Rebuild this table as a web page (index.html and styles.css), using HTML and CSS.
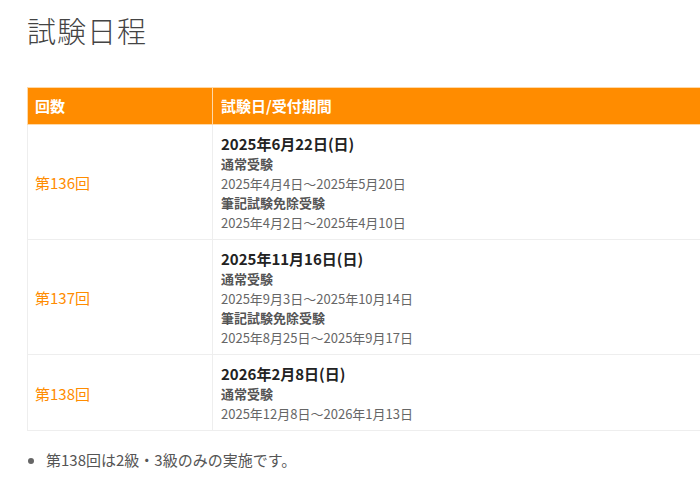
FILE: index.html
```html
<!DOCTYPE html>
<html lang="ja">
<head>
<meta charset="utf-8">
<link rel="stylesheet" href="styles.css">
</head>
<body>
<main class="page">
  <h1 class="title">試験日程</h1>
  <table class="schedule">
    <thead>
      <tr>
        <th class="col-no">回数</th>
        <th class="col-date">試験日/受付期間</th>
      </tr>
    </thead>
    <tbody>
      <tr>
        <td class="round">第136回</td>
        <td class="info">
          <div class="exam-date">2025年6月22日(日)</div>
          <div class="kind">通常受験</div>
          <div class="period">2025年4月4日～2025年5月20日</div>
          <div class="kind">筆記試験免除受験</div>
          <div class="period">2025年4月2日～2025年4月10日</div>
        </td>
      </tr>
      <tr>
        <td class="round">第137回</td>
        <td class="info">
          <div class="exam-date">2025年11月16日(日)</div>
          <div class="kind">通常受験</div>
          <div class="period">2025年9月3日～2025年10月14日</div>
          <div class="kind">筆記試験免除受験</div>
          <div class="period">2025年8月25日～2025年9月17日</div>
        </td>
      </tr>
      <tr>
        <td class="round">第138回</td>
        <td class="info">
          <div class="exam-date">2026年2月8日(日)</div>
          <div class="kind">通常受験</div>
          <div class="period">2025年12月8日～2026年1月13日</div>
        </td>
      </tr>
    </tbody>
  </table>
  <ul class="notes">
    <li>第138回は2級・3級のみの実施です。</li>
  </ul>
</main>
</body>
</html>
```

FILE: styles.css
```css
html, body {
  margin: 0;
  padding: 0;
  background: #fff;
}
body {
  font-family: "Noto Sans CJK JP", "Noto Sans", sans-serif;
  color: #555;
}
.page {
  padding: 10px 0 0 27px;
}
.title {
  margin: 0 0 36px 0;
  font-size: 29px;
  font-weight: 300;
  line-height: 41px;
  letter-spacing: 1px;
  color: #444;
}
.schedule {
  width: 100%;
  border-collapse: collapse;
  font-size: 13px;
}
.schedule th {
  background: #ff8c00;
  color: #fff;
  font-weight: 700;
  font-size: 15px;
  line-height: 21px;
  text-align: left;
  padding: 7px 8px 8px;
  border: 1px solid #ffd9a8;
}
.col-no {
  width: 169px;
}
.schedule td {
  border: 1px solid #eee;
  padding: 8px 8px 7px;
  vertical-align: middle;
}
.schedule th:first-child,
.schedule td:first-child {
  padding-left: 7px;
}
.schedule th:last-child,
.schedule td:last-child {
  border-right: 0;
}
.round {
  color: #ff8c00;
  font-size: 15px;
}
.exam-date {
  font-size: 15px;
  font-weight: 700;
  line-height: 21px;
  color: #222;
}
.kind {
  font-weight: 700;
  line-height: 19.5px;
  color: #555;
}
.period {
  line-height: 19.5px;
  color: #666;
}
.notes {
  margin: 18px 0 0 0;
  padding: 0 0 0 19px;
  font-size: 15px;
  line-height: 22px;
  color: #555;
}
.notes li::marker {
  color: #666;
}
```
